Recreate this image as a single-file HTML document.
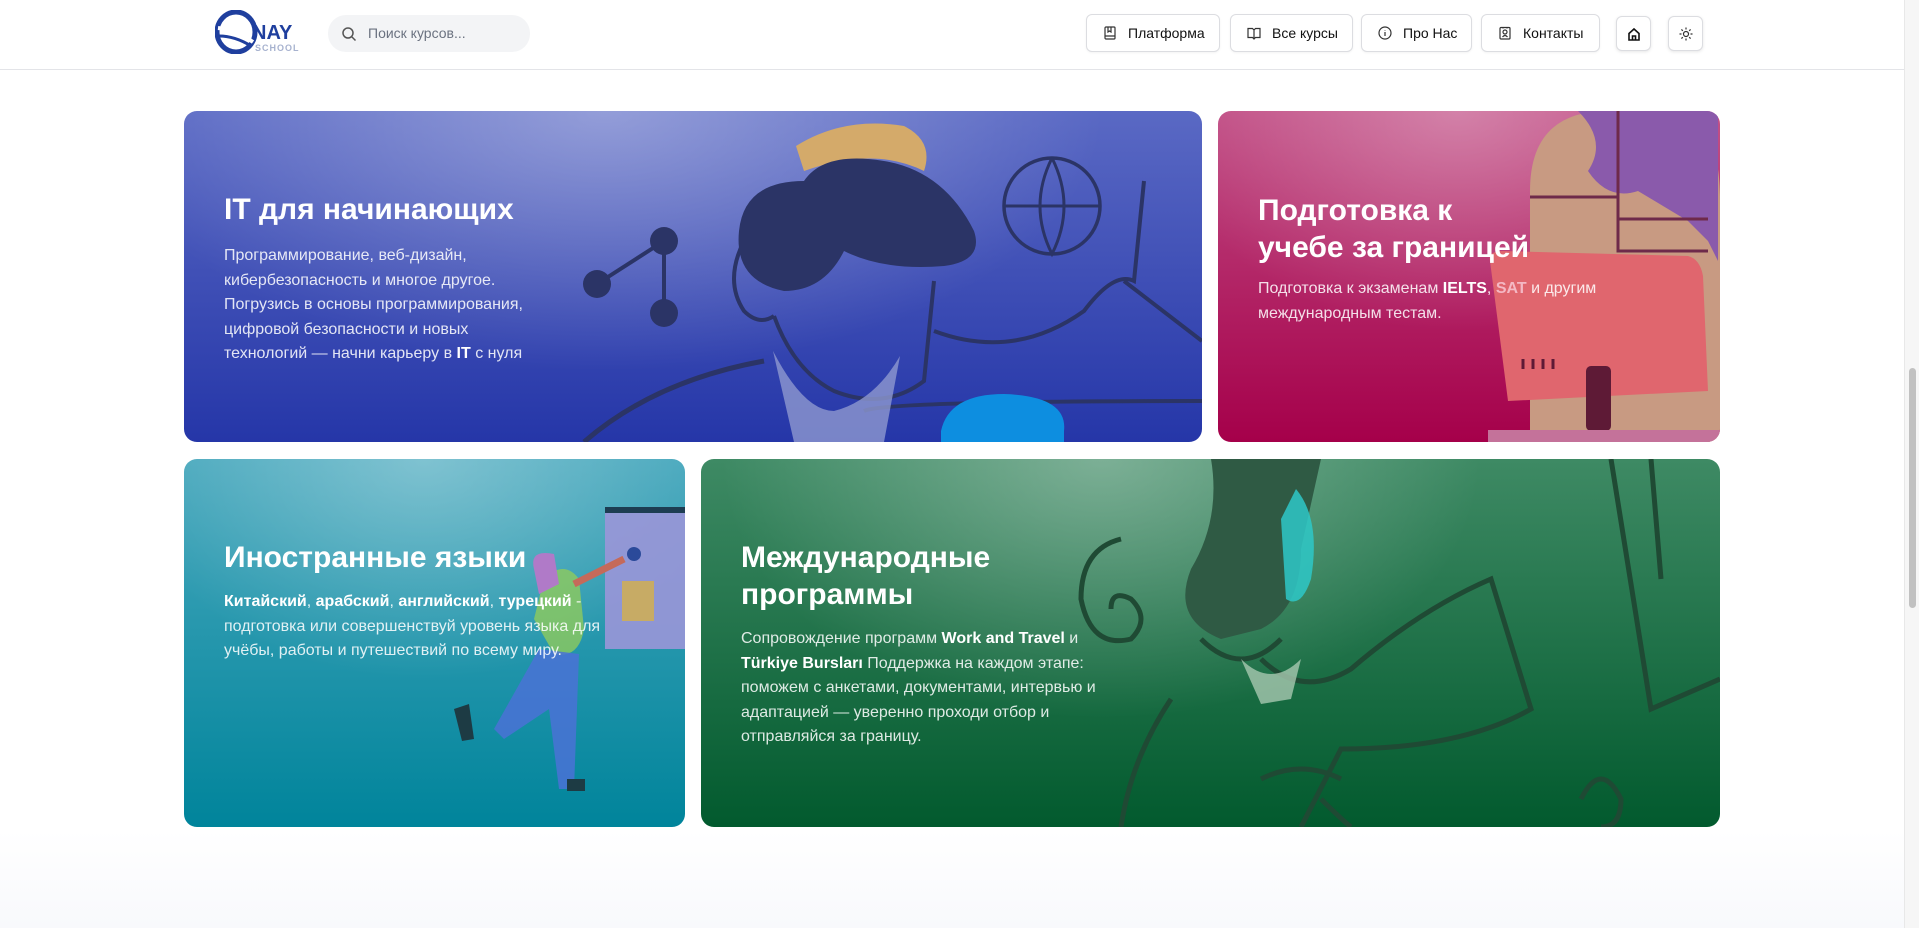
<!DOCTYPE html>
<html><head><meta charset="utf-8">
<style>
*{margin:0;padding:0;box-sizing:border-box}
html,body{width:1919px;height:928px;overflow:hidden}
body{font-family:"Liberation Sans","Noto Sans CJK SC",sans-serif;background:linear-gradient(#fff 0,#fff 830px,#f8f9fc 928px);position:relative}
.hdr{position:absolute;left:0;top:0;width:1904px;height:70px;background:#fff;border-bottom:1px solid #e3e4e8}
.search{position:absolute;left:328px;top:15px;width:202px;height:37px;border-radius:18px;background:#f3f4f6;font-size:14px;color:#6b7280;line-height:37px;padding-left:40px;white-space:nowrap}
.search svg{position:absolute;left:13px;top:11px}
.btn{position:absolute;top:14px;height:38px;border:1px solid #dcdde1;border-radius:6px;background:#fff;font-size:14px;color:#111;line-height:36px;box-shadow:0 1px 2px rgba(0,0,0,.05);white-space:nowrap}
.btn svg{position:absolute;left:16px;top:11px}
.btn span{position:absolute;left:41px}
.ib{position:absolute;top:16px;width:35px;height:35px;border:1px solid #dcdde1;border-radius:6px;background:#fff;box-shadow:0 1px 3px rgba(0,0,0,.1)}
.ib svg{position:absolute;left:10px;top:10px}
.sb{position:absolute;left:1904px;top:0;width:15px;height:928px;background:#f6f6f6;border-left:1px solid #e8e8e8}
.sb div{position:absolute;left:4px;top:368px;width:7px;height:240px;border-radius:4px;background:#c1c1c1}
.card{position:absolute;border-radius:13px;overflow:hidden;color:#fff}
.card svg.il{position:absolute;left:0;top:0}
.t{position:absolute;left:40px;font-size:30px;font-weight:bold;line-height:37px;white-space:nowrap}
.d{position:absolute;left:40px;font-size:16px;line-height:24.5px;color:rgba(255,255,255,.86);white-space:nowrap}
.d b{color:#fff}
</style></head><body>
<div class="hdr">
  <svg style="position:absolute;left:215px;top:10px" width="92" height="44" viewBox="0 0 92 44">
    <ellipse cx="21" cy="22" rx="19" ry="20" fill="none" stroke="#1f3f9e" stroke-width="5"/>
    <path d="M3 18 Q20 20 38 32" stroke="#fff" stroke-width="4" fill="none"/>
    <path d="M4 26 Q20 26 36 36" stroke="#1f3f9e" stroke-width="3" fill="none"/>
    <text x="37" y="29" font-family="Liberation Sans" font-weight="bold" font-size="20" fill="#1f3f9e">NAY</text>
    <text x="40" y="41" font-family="Liberation Sans" font-weight="bold" font-size="9" fill="#a7b2cf" letter-spacing="1">SCHOOL</text>
  </svg>
  <div class="search"><svg width="16" height="16" viewBox="0 0 16 16"><circle cx="7" cy="7" r="5" fill="none" stroke="#555" stroke-width="1.5"/><path d="M11 11l3.5 3.5" stroke="#555" stroke-width="1.5"/></svg>Поиск курсов...</div>
  <div class="btn" style="left:1086px;width:134px"><svg width="14" height="14" viewBox="0 0 14 14" fill="none" stroke="#333" stroke-width="1.2"><rect x="2" y="1" width="10" height="12" rx="1"/><path d="M2 10h10M5 1v5l1.5-1 1.5 1V1"/></svg><span>Платформа</span></div>
  <div class="btn" style="left:1230px;width:123px"><svg width="14" height="14" viewBox="0 0 14 14" fill="none" stroke="#333" stroke-width="1.2"><path d="M1 2.5h4.5L7 4l1.5-1.5H13v9H8.5L7 13l-1.5-1.5H1zM7 4v9"/></svg><span>Все курсы</span></div>
  <div class="btn" style="left:1361px;width:111px"><svg width="14" height="14" viewBox="0 0 14 14" fill="none" stroke="#333" stroke-width="1.2"><circle cx="7" cy="7" r="6"/><path d="M7 6v4M7 4v.5"/></svg><span>Про Нас</span></div>
  <div class="btn" style="left:1481px;width:119px"><svg width="14" height="14" viewBox="0 0 14 14" fill="none" stroke="#333" stroke-width="1.2"><rect x="2" y="1.5" width="10" height="11.5" rx="1"/><circle cx="7" cy="6" r="2"/><path d="M4.5 11q2.5-3 5 0M5 1v1.5M9 1v1.5"/></svg><span>Контакты</span></div>
  <div class="ib" style="left:1616px"><svg width="14" height="14" viewBox="0 0 14 14" fill="none" stroke="#111" stroke-width="1.6"><path d="M2 6.5L7 2l5 4.5V13H2zM5.5 13V9h3v4"/></svg></div>
  <div class="ib" style="left:1668px"><svg width="14" height="14" viewBox="0 0 14 14" fill="none" stroke="#333" stroke-width="1.2"><circle cx="7" cy="7" r="2.5"/><path d="M7 .5v2M7 11.5v2M.5 7h2M11.5 7h2M2.4 2.4l1.4 1.4M10.2 10.2l1.4 1.4M2.4 11.6l1.4-1.4M10.2 3.8l1.4-1.4"/></svg></div>
</div>

<!-- Card 1 -->
<div class="card" style="left:184px;top:111px;width:1018px;height:331px;background:radial-gradient(ellipse 500px 260px at 420px 0,rgba(255,255,255,.35),rgba(255,255,255,0) 100%),linear-gradient(#5a69c4,#2536a8)">
  <svg class="il" width="1018" height="331" viewBox="0 0 1018 331">
    <g stroke="#2b3466" stroke-width="4" fill="none">
      <path d="M480 130L413 173M480 130V202"/>
      <path d="M560 130 Q540 170 560 200 Q575 215 590 205"/>
      <path d="M590 205 Q610 260 650 280 Q700 300 740 270 L750 170"/>
      <path d="M580 250 Q470 270 400 331" stroke-width="5"/>
      <path d="M750 220 Q830 250 900 200 Q930 160 950 170 L960 70 M940 170 L1018 230"/>
      <circle cx="868" cy="95" r="48" stroke-width="3.5"/><path d="M820 95h96M868 47q-24 48 0 96q24-48 0-96" stroke-width="3"/>
      <path d="M680 300 Q700 290 1018 290" stroke-width="4"/>
    </g>
    <circle cx="480" cy="130" r="14" fill="#2b3466"/><circle cx="413" cy="173" r="14" fill="#2b3466"/><circle cx="480" cy="202" r="14" fill="#2b3466"/>
    <path d="M612 35 Q660 5 720 15 Q750 30 740 60 Q690 35 620 60 Z" fill="#d4aa6a"/>
    <path d="M555 120 Q560 70 620 70 Q640 40 700 50 Q760 60 790 120 Q800 150 760 155 Q700 160 660 140 Q640 180 600 180 Q550 170 555 120Z" fill="#2b3466"/>
    <path d="M589 240 Q620 300 650 300 Q690 290 716 245 L700 331 L610 331 Z" fill="#8f99d0" opacity=".8"/>
    <path d="M757 320 Q765 283 820 283 Q884 285 880 320 L880 331 L757 331Z" fill="#0d8ee0"/>
  </svg>
  <div class="t" style="top:80px">IT для начинающих</div>
  <div class="d" style="top:133px">Программирование, веб-дизайн,<br>кибербезопасность и многое другое.<br>Погрузись в основы программирования,<br>цифровой безопасности и новых<br>технологий — начни карьеру в <b>IT</b> с нуля</div>
</div>

<!-- Card 2 -->
<div class="card" style="left:1218px;top:111px;width:502px;height:331px;background:radial-gradient(ellipse 300px 220px at 240px 0,rgba(255,255,255,.3),rgba(255,255,255,0) 100%),linear-gradient(#c04b83,#a5004a)">
  <svg class="il" width="502" height="331" viewBox="0 0 502 331">
    <path d="M312 331 V80 Q312 0 390 0 L470 0 Q502 20 502 90 V331Z" fill="#c89a82"/>
    <path d="M360 0 Q390 30 370 60 Q390 90 420 80 L470 110 L490 130 L500 150 V0Z" fill="#8a5aab"/>
    <path d="M400 0V140 L490 140" fill="none" stroke="#6e2a4a" stroke-width="3"/>
    <path d="M312 86H400M400 108H490" stroke="#6e2a4a" stroke-width="3"/>
    <path d="M272 150 Q270 140 285 140 L470 145 Q482 148 485 165 L490 280 L290 290Z" fill="#e0666e"/>
    <rect x="368" y="255" width="25" height="65" rx="5" fill="#5e1a36"/>
    <path d="M305 248v10M315 248v10M325 248v10M335 248v10" stroke="#5e1a36" stroke-width="3"/>
    <rect x="270" y="319" width="232" height="12" fill="#c4729a"/>
  </svg>
  <div class="t" style="top:81px">Подготовка к<br>учебе за границей</div>
  <div class="d" style="top:166px">Подготовка к экзаменам <b>IELTS</b>, <b style="color:#f4b8c4">SAT</b> и другим<br>международным тестам.</div>
</div>

<!-- Card 3 -->
<div class="card" style="left:184px;top:459px;width:501px;height:368px;background:radial-gradient(ellipse 300px 220px at 240px 0,rgba(255,255,255,.3),rgba(255,255,255,0) 100%),linear-gradient(#48a8bd,#00849b)">
  <svg class="il" width="501" height="368" viewBox="0 0 501 368">
    <rect x="421" y="50" width="80" height="140" fill="#9a96d8" opacity=".9"/>
    <rect x="421" y="48" width="80" height="6" fill="#1d3d52"/>
    <rect x="438" y="122" width="32" height="40" fill="#d4b048" opacity=".8"/>
    <path d="M360 120 Q380 100 395 120 L400 170 Q395 200 370 195 L350 160Z" fill="#8fcb5c" opacity=".8"/>
    <path d="M350 110 Q345 90 370 95 L375 125 L355 135Z" fill="#b07ac8"/>
    <path d="M390 125 L440 100" stroke="#c56a5a" stroke-width="7"/>
    <circle cx="450" cy="95" r="7" fill="#2b4a9a"/>
    <path d="M355 190 L395 195 L390 330 L375 330 L365 250 L320 280 L310 270 Z" fill="#4a72d6" opacity=".85"/>
    <path d="M270 250 L285 245 L290 280 L278 282Z" fill="#1d3b44"/>
    <rect x="383" y="320" width="18" height="12" fill="#1d3b44"/>
  </svg>
  <div class="t" style="top:80px">Иностранные языки</div>
  <div class="d" style="top:131px"><b>Китайский</b>, <b>арабский</b>, <b>английский</b>, <b>турецкий</b> -<br>подготовка или совершенствуй уровень языка для<br>учёбы, работы и путешествий по всему миру.</div>
</div>

<!-- Card 4 -->
<div class="card" style="left:701px;top:459px;width:1019px;height:368px;background:radial-gradient(ellipse 380px 260px at 400px 0,rgba(255,255,255,.32),rgba(255,255,255,0) 100%),linear-gradient(#3e8a64,#025a2e)">
  <svg class="il" width="1019" height="368" viewBox="0 0 1019 368">
    <path d="M510 0 Q520 60 490 110 Q470 160 520 180 L560 170 Q600 150 600 90 L620 0Z" fill="#2f5a44"/>
    <path d="M595 30 Q620 60 610 120 Q600 150 585 140 L580 60Z" fill="#2ec8c8" opacity=".85"/>
    <g stroke="#1f4a34" stroke-width="5" fill="none">
      <path d="M420 80 Q380 90 380 140 Q390 190 430 180 Q450 160 430 140 Q410 130 410 150"/>
      <path d="M500 180 Q540 220 580 180 M560 200 Q600 240 650 210 Q720 150 790 120 L830 250 Q760 290 640 290 L600 368"/>
      <path d="M470 240 Q430 300 420 368"/>
      <path d="M950 0 L960 120 M910 0 L950 250 L1019 220"/>
      <path d="M560 320 Q600 300 640 320 M620 340 Q640 360 650 368"/>
      <path d="M880 340 Q900 300 920 340 Q920 368 900 368"/>
    </g>
    <path d="M540 200 Q570 230 600 200 L590 240 L560 245Z" fill="#a8c8b0" opacity=".8"/>
  </svg>
  <div class="t" style="top:80px">Международные<br>программы</div>
  <div class="d" style="top:168px">Сопровождение программ <b>Work and Travel</b> и<br><b>Türkiye Bursları</b> Поддержка на каждом этапе:<br>поможем с анкетами, документами, интервью и<br>адаптацией — уверенно проходи отбор и<br>отправляйся за границу.</div>
</div>

<div class="sb"><div></div></div>
</body></html>
